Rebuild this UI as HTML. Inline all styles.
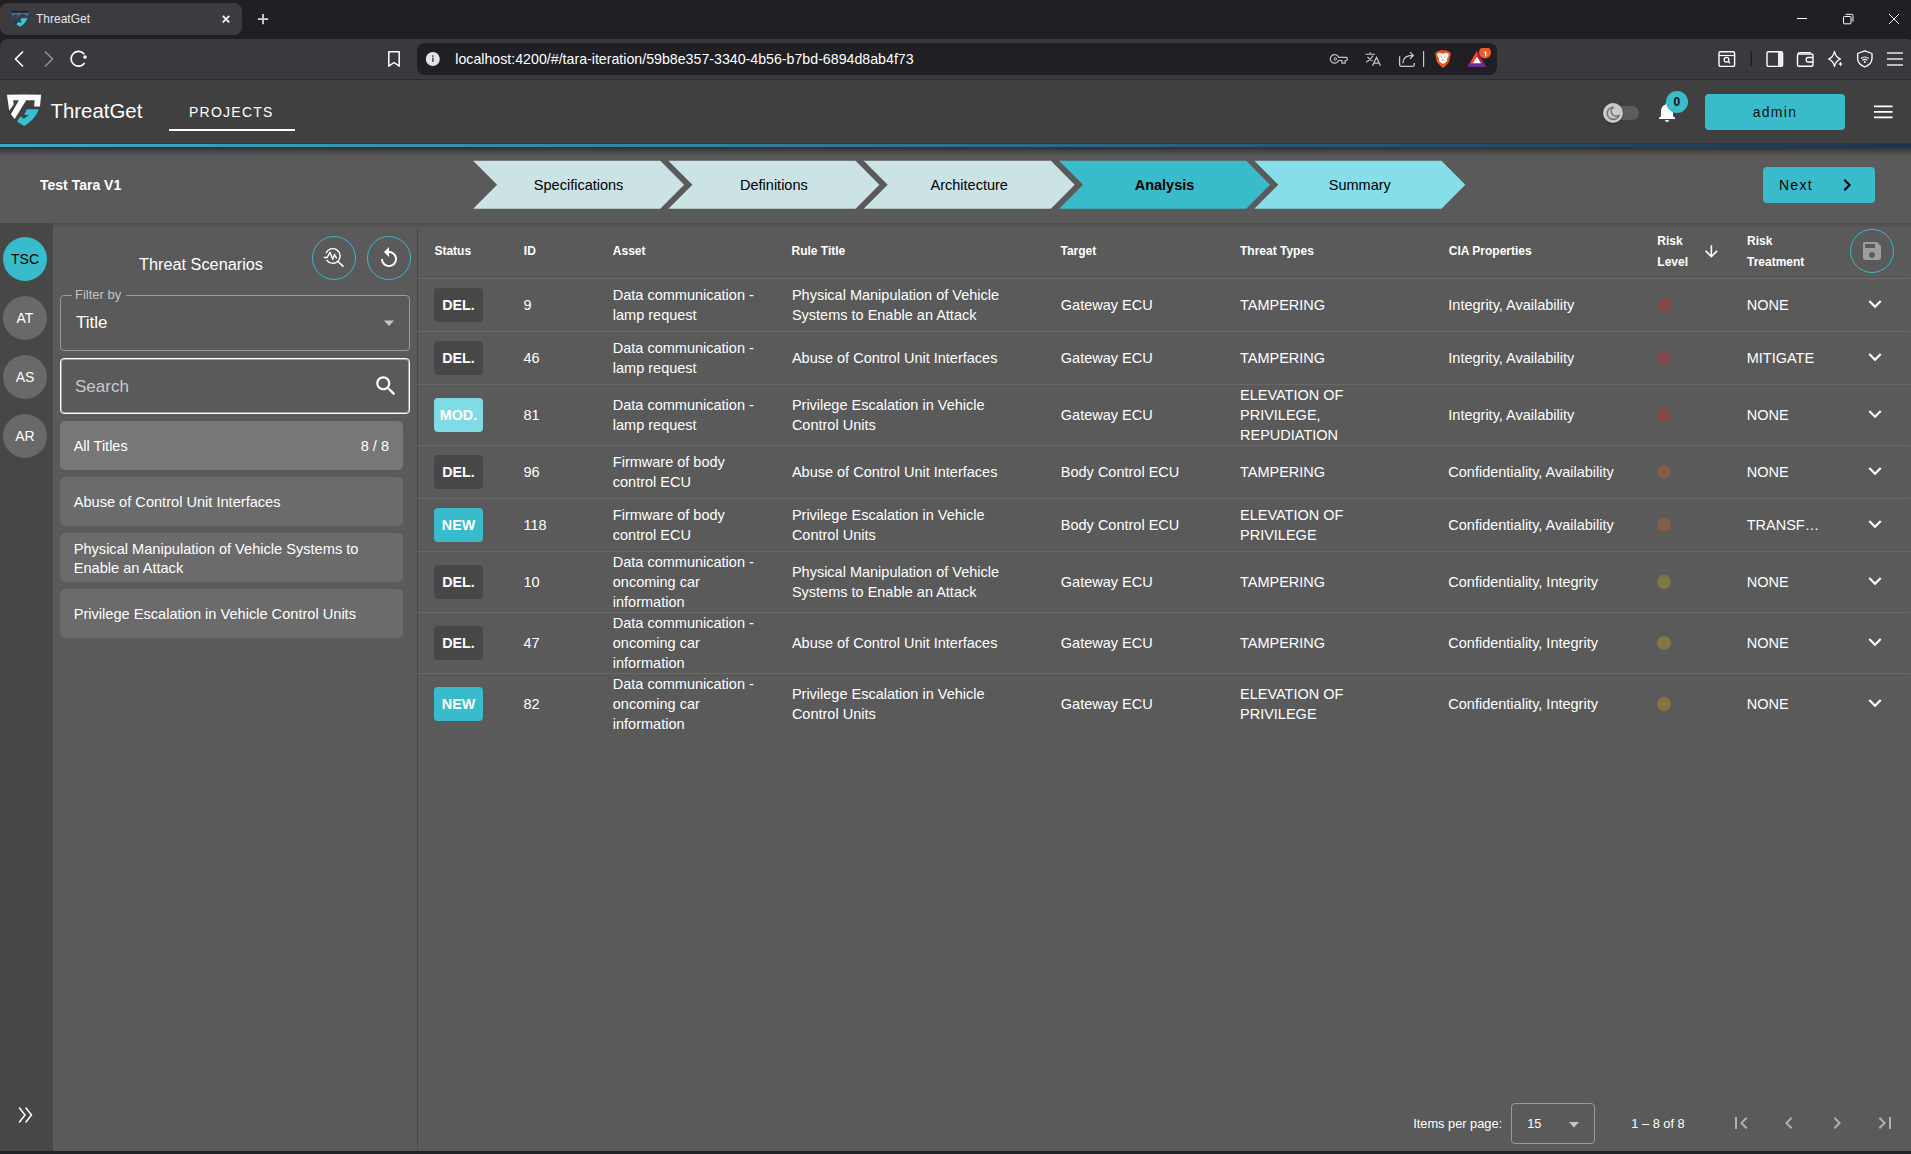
<!DOCTYPE html>
<html><head><meta charset="utf-8">
<style>
*{box-sizing:border-box;margin:0;padding:0}
html,body{width:1911px;height:1154px;overflow:hidden;background:#5a5a5a;font-family:"Liberation Sans",sans-serif;color:#fff}
.a{position:absolute}
.t{position:absolute;white-space:nowrap;line-height:1}
svg{display:block}
/* browser chrome */
#tabstrip{left:0;top:0;width:1911px;height:50px;background:#202024}
#tab{left:0;top:3px;width:242px;height:32px;background:#3c3b40;border-radius:8px}
#toolbar{left:0;top:39px;width:1911px;height:40px;background:#3a393e;border-radius:8px 3px 0 0}
#tbline{left:0;top:79px;width:1911px;height:1px;background:#2c2b30}
#urlbar{left:417px;top:43px;width:1080px;height:32px;background:#202024;border-radius:8px}
/* app header */
#apphdr{left:0;top:80px;width:1911px;height:63px;background:#404040}
#tealline{left:0;top:143px;width:1911px;height:5px;background:#353333;}
#teal{left:0;top:144px;width:1911px;height:3px;background:linear-gradient(to right,#3ca9c6 0%,#3383a2 34%,#2b6a89 55%,#22506e 76%,#193453 100%)}
#stepbar{left:0;top:148px;width:1911px;height:75px;background:#5a5a5a}
#stepshadow{left:0;top:148px;width:1911px;height:8px;background:linear-gradient(#333 0%,#4a4a4a 50%,#5a5a5a 100%)}
#nav{left:0;top:223px;width:53px;height:928px;background:#474747}
#panel{left:53px;top:223px;width:364px;height:928px;background:#5a5a5a}
#panelborder{left:417px;top:223px;width:1px;height:928px;background:#4a4a4a}
#mainshadow{left:53px;top:223px;width:1858px;height:5px;background:linear-gradient(#4d4d4d,#5a5a5a)}
#bottomstrip{left:0;top:1151px;width:1911px;height:3px;background:#202326}
.th{display:flex;align-items:center;font-size:12px;font-weight:700;line-height:21.6px;color:#fff;white-space:nowrap}
.td{display:flex;align-items:center;font-size:14.5px;line-height:20px;color:#fff;white-space:nowrap}
.bdg{width:49px;height:34px;border-radius:4px;font-size:14.3px;font-weight:700;color:#fff;line-height:34px;text-align:center}
.rl{left:418px;width:1492px;height:1px;background:#686868}
</style></head>
<body>
<div id="tabstrip" class="a"></div>
<div id="tab" class="a"></div>
<div id="toolbar" class="a"></div>
<div id="tbline" class="a"></div>
<div id="urlbar" class="a"></div>

<!-- tab -->
<svg class="a" style="left:11px;top:9.8px" width="18" height="18.3" viewBox="2 3 36 36" preserveAspectRatio="none">
<defs><linearGradient id="fg" x1="0" y1="0" x2="0" y2="1"><stop offset="0" stop-color="#0c2543"/><stop offset="0.12" stop-color="#0c2543"/><stop offset="0.25" stop-color="#6a86a3"/><stop offset="0.4" stop-color="#2b4d72"/><stop offset="1" stop-color="#143258"/></linearGradient></defs><path d="M2.95 4.85Q20 3.9 37.1 4.85L36 16.6L30.1 16.6L30.7 10.2L22.2 10.2L10.7 29.1L6.9 24.3L14.9 10.2L9.2 10.2L9.7 14.6L5.2 20.8Z" fill="url(#fg)"/>
<path d="M35 19.2L22.9 19.2L20.1 24.8L24.8 25.3L19.75 28.8L16.6 26.3L13 31.4L20.1 35.9Q31.2 29.5 35 19.2Z" fill="#3cc8d8"/>
</svg>
<div class="t" style="left:36px;top:13.2px;font-size:12px;color:#e6e6e8">ThreatGet</div>
<svg class="a" style="left:220px;top:12.8px" width="12" height="12" viewBox="0 0 12 12"><path d="M2.8 2.8L9.2 9.3M9.2 2.8L2.8 9.3" stroke="#f2f2f4" stroke-width="1.9"/></svg>
<svg class="a" style="left:256px;top:12px" width="14" height="14" viewBox="0 0 14 14"><path d="M7.05 1.9V12.2M1.9 7.05H12.2" stroke="#d6d6d8" stroke-width="1.8"/></svg>
<!-- window controls -->
<svg class="a" style="left:1795px;top:12px" width="14" height="14" viewBox="0 0 14 14"><path d="M2 6.5H12" stroke="#fff" stroke-width="1"/></svg>
<svg class="a" style="left:1841px;top:12px" width="14" height="14" viewBox="0 0 14 14"><rect x="2.5" y="4.5" width="7.5" height="7.3" rx="0.8" fill="none" stroke="#fff" stroke-width="1"/><path d="M4.6 2.3H10.8Q12 2.3 12 3.5V9.6" fill="none" stroke="#fff" stroke-width="1"/></svg>
<svg class="a" style="left:1887px;top:12px" width="14" height="14" viewBox="0 0 14 14"><path d="M2 2L12 12M12 2L2 12" stroke="#fff" stroke-width="1"/></svg>
<!-- toolbar -->
<svg class="a" style="left:10px;top:49px" width="80" height="20" viewBox="10 49 80 20">
<path d="M23 51.5L15.5 59L23 66.5" fill="none" stroke="#fff" stroke-width="1.6"/>
<path d="M45 51.5L52.5 59L45 66.5" fill="none" stroke="#8e8e92" stroke-width="1.6"/>
<path d="M84.6 63A7.4 7.4 0 1 1 84.3 54.2" fill="none" stroke="#fff" stroke-width="1.7"/>
<circle cx="85" cy="57.1" r="1.8" fill="#fff"/>
</svg>
<svg class="a" style="left:386px;top:50px" width="16" height="18" viewBox="386 50 16 18"><path d="M388.8 51.8H399.2V66.2L394 62.5L388.8 66.2Z" fill="none" stroke="#fff" stroke-width="1.5" stroke-linejoin="round"/></svg>
<svg class="a" style="left:425px;top:52px" width="16" height="14" viewBox="425 52 16 14"><circle cx="432.8" cy="59" r="7" fill="#e3e3e6"/><rect x="432" y="57.6" width="1.7" height="4.4" fill="#55555a"/><rect x="432" y="55.3" width="1.7" height="1.5" fill="#55555a"/></svg>
<div class="t" style="left:455.3px;top:51.7px;font-size:14.2px;color:#fff">localhost:4200/#/tara-iteration/59b8e357-3340-4b56-b7bd-6894d8ab4f73</div>
<!-- url right icons -->
<svg class="a" style="left:1328px;top:48px" width="170" height="22" viewBox="1328 48 170 22">
<path d="M1338.6 57.3A4.3 4.3 0 1 0 1338.6 60.5H1342V63.2H1345.2V60.5H1346.3Q1347.2 60.5 1347.2 59.6V58.2Q1347.2 57.3 1346.3 57.3Z" fill="none" stroke="#c8c8cc" stroke-width="1.2" stroke-linejoin="round"/>
<ellipse cx="1335.3" cy="59" rx="1.1" ry="1.4" fill="none" stroke="#c8c8cc" stroke-width="1"/>
<path d="M1365.5 54.2H1375M1370.2 52.2V54.2M1373.2 55.5Q1371 59.5 1366 62.2M1367.5 56.8Q1369.5 59.5 1372.8 60.8" fill="none" stroke="#c8c8cc" stroke-width="1.1"/>
<path d="M1372.5 65.8L1376.5 57.4L1380.5 65.8M1373.8 63.2H1379.2" fill="none" stroke="#c8c8cc" stroke-width="1.2"/>
<path d="M1399.6 56.3V64.6Q1399.6 66.3 1401.3 66.3H1412.6Q1414.3 66.3 1414.3 64.6V63.1" fill="none" stroke="#c8c8cc" stroke-width="1.3"/>
<path d="M1402.8 63.2Q1403 55.4 1413 55.4M1410 52.1L1413.3 55.4L1410 58.8" fill="none" stroke="#c8c8cc" stroke-width="1.3"/>
<rect x="1423" y="51" width="1.2" height="16" fill="#c8c8cc"/>
<path d="M1437 51.5L1440.5 50.3H1445.5L1449 51.5L1451 53.5L1450.3 56L1449 62L1446 65.5L1443 68L1440 65.5L1437 62L1435.7 56L1435 53.5Z" fill="#f1531f"/>
<path d="M1437.3 54.2L1439.5 52.8L1441.8 53.5H1444.2L1446.5 52.8L1448.7 54.2L1448.3 56.5L1446.8 59L1447.3 60.8L1445.3 62.5L1443 64L1440.7 62.5L1438.7 60.8L1439.2 59L1437.7 56.5Z" fill="#fff"/><path d="M1440.2 56.2L1442 57L1441.2 58ZM1445.8 56.2L1444 57L1444.8 58ZM1442 59.5H1444L1443 61.3Z" fill="#f1531f"/>
<path d="M1477 50.8L1486.4 66.9H1467.8Z" fill="#9e1f63"/>
<path d="M1477 50.8L1467.8 66.9L1472.5 66.9L1477 57Z" fill="#ff4724"/>
<path d="M1467.8 66.9L1470.3 63.4H1483.8L1486.4 66.9Z" fill="#662d91"/>
<path d="M1477 56.8L1481.2 63.2H1472.8Z" fill="#fff"/>
<circle cx="1485" cy="52.6" r="6" fill="#f25a2a"/>
</svg>
<svg class="a" style="left:1480px;top:47.5px" width="10" height="10" viewBox="0 0 10 10"><path d="M4.2 4.3L5.8 3.2H6.4V8.2H5.1V4.8L4.2 5.4Z" fill="#fff"/></svg>
<!-- right toolbar icons -->
<svg class="a" style="left:1714px;top:48px" width="197" height="22" viewBox="1714 48 197 22">
<rect x="1719" y="51.8" width="15.6" height="14.6" rx="1.5" fill="none" stroke="#fff" stroke-width="1.4"/>
<path d="M1719 55.5H1734.6" stroke="#fff" stroke-width="1.2"/>
<circle cx="1726.5" cy="59.8" r="2.4" fill="none" stroke="#fff" stroke-width="1.3"/>
<path d="M1728.3 61.6L1730 63.3" stroke="#fff" stroke-width="1.3"/>
<rect x="1750.5" y="51" width="1.5" height="15.5" fill="#1f1f23"/>
<rect x="1767" y="51.8" width="15.6" height="14.6" rx="1.5" fill="none" stroke="#fff" stroke-width="1.4"/>
<rect x="1778" y="52" width="4.5" height="14.2" fill="#eee"/>
<path d="M1798 54.3Q1798 52.5 1800 52.5H1810.8" fill="none" stroke="#fff" stroke-width="1.2"/>
<rect x="1797.5" y="54" width="15.5" height="12.2" rx="1.5" fill="none" stroke="#fff" stroke-width="1.4"/>
<path d="M1813 57.5H1808Q1806.2 57.5 1806.2 59.2V60.3Q1806.2 62 1808 62H1813" fill="none" stroke="#fff" stroke-width="1.3"/>
<path d="M1834.5 51.3Q1835.5 57 1840.5 59Q1835.5 61 1834.5 66.5Q1833.5 61 1828.5 59Q1833.5 57 1834.5 51.3Z" fill="none" stroke="#fff" stroke-width="1.3" stroke-linejoin="round"/>
<path d="M1840.5 61.5L1841.2 63.3L1843 64L1841.2 64.7L1840.5 66.5L1839.8 64.7L1838 64L1839.8 63.3Z" fill="#fff"/>
<path d="M1864.8 50.8L1872 53.5V58.5Q1872 64 1864.8 67Q1857.6 64 1857.6 58.5V53.5Z" fill="none" stroke="#fff" stroke-width="1.3" stroke-linejoin="round"/>
<path d="M1861 58.5Q1864.8 55.5 1868.6 58.5M1862.5 60.3Q1864.8 58.5 1867.1 60.3" fill="none" stroke="#fff" stroke-width="1.1"/>
<circle cx="1864.8" cy="62" r="0.9" fill="#fff"/>
<path d="M1887 53H1903M1887 59H1903M1887 65H1903" stroke="#e8e8ea" stroke-width="1.5"/>
</svg>
<div id="apphdr" class="a"></div>

<!-- app header content -->
<svg class="a" style="left:4px;top:90px" width="42" height="40" viewBox="0 0 42 40">
<path d="M2.95 4.85Q20 3.9 37.1 4.85L36 16.6L30.1 16.6L30.7 10.2L22.2 10.2L10.7 29.1L6.9 24.3L14.9 10.2L9.2 10.2L9.7 14.6L5.2 20.8Z" fill="#fff"/>
<path d="M35 19.2L22.9 19.2L20.1 24.8L24.8 25.3L19.75 28.8L16.6 26.3L13 31.4L20.1 35.9Q31.2 29.5 35 19.2Z" fill="#36bfcc"/>
</svg>
<div class="t" style="left:50.5px;top:101.2px;font-size:20.4px;color:#fff">ThreatGet</div>
<div class="t" style="left:189px;top:105.1px;font-size:14px;letter-spacing:1.25px;color:#fff">PROJECTS</div>
<div class="a" style="left:169px;top:129px;width:126px;height:1.6px;background:#fff"></div>
<!-- toggle -->
<div class="a" style="left:1604px;top:106px;width:35px;height:14px;border-radius:7px;background:#5c5c5c"></div>
<div class="a" style="left:1603px;top:103px;width:20px;height:20px;border-radius:10px;background:#c9c9c9;box-shadow:0 1px 2px rgba(0,0,0,.4)"></div>
<svg class="a" style="left:1605px;top:105px" width="16" height="16" viewBox="0 0 16 16"><path d="M8.3 2.3A6 6 0 1 0 14 10.3A4.8 4.8 0 0 1 8.3 2.3Z" fill="none" stroke="#717171" stroke-width="1.6" stroke-linejoin="round"/></svg>
<!-- bell -->
<svg class="a" style="left:1655px;top:100px" width="24" height="24" viewBox="0 0 24 24"><path d="M12 22c1.1 0 2-.9 2-2h-4c0 1.1.89 2 2 2zm6-6v-5c0-3.07-1.64-5.64-4.5-6.32V4c0-.83-.67-1.5-1.5-1.5s-1.5.67-1.5 1.5v.68C7.63 5.36 6 7.92 6 11v5l-2 2v1h16v-1l-2-2z" fill="#fff"/></svg>
<div class="a" style="left:1666px;top:91px;width:22px;height:22px;border-radius:11px;background:#38bccb"></div>
<div class="t" style="left:1673.5px;top:96px;font-size:12px;font-weight:700;color:#111">0</div>
<!-- admin -->
<div class="a" style="left:1705px;top:94px;width:140px;height:36px;border-radius:4px;background:#38bccb"></div>
<div class="t" style="left:1705px;top:105px;width:140px;text-align:center;font-size:14px;letter-spacing:1.25px;color:#111">admin</div>
<svg class="a" style="left:1872px;top:102px" width="22" height="20" viewBox="0 0 22 20"><path d="M2 4.3H20.5M2 9.8H20.5M2 15.3H20.5" stroke="#fff" stroke-width="1.8"/></svg>
<div id="tealline" class="a"></div>
<div id="teal" class="a"></div>
<div id="stepbar" class="a"></div>

<div id="stepshadow" class="a"></div>

<!-- stepper -->
<div class="t" style="left:40px;top:178.4px;font-size:14px;font-weight:700;color:#fff">Test Tara V1</div>
<svg class="a" style="left:0;top:0" width="1911" height="230" viewBox="0 0 1911 230"><polygon points="473.1,160.8 660.3,160.8 684.1,184.8 660.3,208.8 473.1,208.8 497.1,184.8" fill="#cbe3e5"/><polygon points="668.4,160.8 855.6,160.8 879.4,184.8 855.6,208.8 668.4,208.8 692.4,184.8" fill="#cbe3e5"/><polygon points="863.7,160.8 1050.9,160.8 1074.7,184.8 1050.9,208.8 863.7,208.8 887.7,184.8" fill="#cbe3e5"/><polygon points="1059.0,160.8 1246.2,160.8 1270.0,184.8 1246.2,208.8 1059.0,208.8 1083.0,184.8" fill="#38bccb"/><polygon points="1254.3,160.8 1441.5,160.8 1465.3,184.8 1441.5,208.8 1254.3,208.8 1278.3,184.8" fill="#85dee8"/></svg>
<div class="t" style="left:478.6px;top:177.9px;width:200px;text-align:center;font-size:14.5px;font-weight:400;color:#000">Specifications</div>
<div class="t" style="left:673.9px;top:177.9px;width:200px;text-align:center;font-size:14.5px;font-weight:400;color:#000">Definitions</div>
<div class="t" style="left:869.2px;top:177.9px;width:200px;text-align:center;font-size:14.5px;font-weight:400;color:#000">Architecture</div>
<div class="t" style="left:1064.5px;top:177.9px;width:200px;text-align:center;font-size:14.5px;font-weight:700;color:#000">Analysis</div>
<div class="t" style="left:1259.8px;top:177.9px;width:200px;text-align:center;font-size:14.5px;font-weight:400;color:#000">Summary</div>

<div class="a" style="left:1763px;top:167px;width:112px;height:36px;border-radius:4px;background:#38bccb"></div>
<div class="t" style="left:1779px;top:178px;font-size:14px;letter-spacing:1.25px;color:#000">Next</div>
<svg class="a" style="left:1835px;top:173px" width="24" height="24" viewBox="0 0 24 24"><path d="M10 6L8.59 7.41 13.17 12l-4.58 4.59L10 18l6-6z" fill="#000"/></svg>
<div id="nav" class="a"></div>
<div id="panel" class="a"></div>
<div id="panelborder" class="a"></div>
<div id="mainshadow" class="a"></div>

<!-- left nav -->
<div class="a" style="left:3px;top:237px;width:44px;height:44px;border-radius:22px;background:#38bccb"></div>
<div class="t" style="left:3px;top:252px;width:44px;text-align:center;font-size:14px;color:#000">TSC</div>
<div class="a" style="left:3px;top:296px;width:44px;height:44px;border-radius:22px;background:#696969"></div>
<div class="t" style="left:3px;top:311.3px;width:44px;text-align:center;font-size:14px;color:#fff">AT</div>
<div class="a" style="left:3px;top:355px;width:44px;height:44px;border-radius:22px;background:#696969"></div>
<div class="t" style="left:3px;top:370.3px;width:44px;text-align:center;font-size:14px;color:#fff">AS</div>
<div class="a" style="left:3px;top:414px;width:44px;height:44px;border-radius:22px;background:#696969"></div>
<div class="t" style="left:3px;top:429.3px;width:44px;text-align:center;font-size:14px;color:#fff">AR</div>
<svg class="a" style="left:13px;top:1103px" width="24" height="24" viewBox="0 0 24 24"><path d="M6.5 5L12 12L6.5 19M13 5L18.5 12L13 19" fill="none" stroke="#fff" stroke-width="1.5" stroke-linecap="round"/></svg>
<!-- side panel -->
<div class="t" style="left:139px;top:256.3px;font-size:16.3px;color:#fff">Threat Scenarios</div>
<div class="a" style="left:312px;top:236px;width:44px;height:44px;border-radius:22px;border:1px solid #36bac9"></div>
<svg class="a" style="left:322px;top:246px" width="24" height="24" viewBox="0 0 24 24"><path d="M4 7.2A7.3 7.3 0 1 1 4.6 13.8" fill="none" stroke="#fff" stroke-width="1.4"/><path d="M15.6 15.1L21.4 20.6" stroke="#fff" stroke-width="1.5"/><path d="M1.8 11.5H5.2L8 6.3L10.7 13.3L12.5 8.5L14.3 11.8H15" fill="none" stroke="#fff" stroke-width="1.4" stroke-linejoin="round"/></svg>
<div class="a" style="left:367px;top:236px;width:44px;height:44px;border-radius:22px;border:1px solid #36bac9"></div>
<svg class="a" style="left:377px;top:246px" width="24" height="24" viewBox="0 0 24 24"><path d="M12 5V1L7 6l5 5V7c3.31 0 6 2.69 6 6s-2.69 6-6 6-6-2.69-6-6H4c0 4.42 3.58 8 8 8s8-3.58 8-8-3.58-8-8-8z" fill="#fff"/></svg>
<!-- filter select -->
<div class="a" style="left:60px;top:295px;width:350px;height:56px;border:1px solid #9a9a9a;border-radius:4px"></div>
<div class="a" style="left:72px;top:293px;width:54px;height:4px;background:#5a5a5a"></div>
<div class="t" style="left:75px;top:288.3px;font-size:13px;color:#c4c4c4">Filter by</div>
<div class="t" style="left:76px;top:313.6px;font-size:17px;color:#fff">Title</div>
<svg class="a" style="left:379px;top:311px" width="20" height="20" viewBox="0 0 20 20"><path d="M5 9.6L10 14.9L15 9.6Z" fill="#c4c4c4"/></svg>
<!-- search -->
<div class="a" style="left:60px;top:358px;width:350px;height:56px;border:1px solid #fff;box-shadow:inset 0 0 0 1px rgba(255,255,255,0.4);border-radius:4px"></div>
<div class="t" style="left:75px;top:377.9px;font-size:17px;color:#c8c8c8">Search</div>
<svg class="a" style="left:373px;top:373px" width="26" height="26" viewBox="0 0 24 24"><path d="M15.5 14h-.79l-.28-.27C15.41 12.59 16 11.11 16 9.5 16 5.91 13.09 3 9.5 3S3 5.91 3 9.5 5.91 16 9.5 16c1.61 0 3.09-.59 4.23-1.57l.27.28v.79l5 4.99L20.49 19l-4.99-5zm-6 0C7.01 14 5 11.99 5 9.5S7.01 5 9.5 5 14 7.01 14 9.5 11.99 14 9.5 14z" fill="#fff"/></svg>
<!-- list -->
<div class="a" style="left:60px;top:421px;width:343px;height:49px;border-radius:5px;background:#777"></div>
<div class="t" style="left:73.7px;top:438.9px;font-size:14.5px;color:#fff">All Titles</div>
<div class="t" style="left:303px;top:438.9px;width:86px;text-align:right;font-size:14.5px;color:#fff">8 / 8</div>
<div class="a" style="left:60px;top:477px;width:343px;height:49px;border-radius:5px;background:#6b6b6b"></div>
<div class="t" style="left:73.7px;top:495.1px;font-size:14.6px;color:#fff">Abuse of Control Unit Interfaces</div>
<div class="a" style="left:60px;top:533px;width:343px;height:49px;border-radius:5px;background:#6b6b6b"></div>
<div class="t" style="left:73.7px;top:539.6px;font-size:14.6px;line-height:19.5px;white-space:normal;width:320px;color:#fff">Physical Manipulation of Vehicle Systems to Enable an Attack</div>
<div class="a" style="left:60px;top:589px;width:343px;height:49px;border-radius:5px;background:#6b6b6b"></div>
<div class="t" style="left:73.7px;top:607.4px;font-size:14.6px;color:#fff">Privilege Escalation in Vehicle Control Units</div>
<!-- table -->
<div class="a th" style="left:434.4px;top:224px;height:55px">Status</div>
<div class="a th" style="left:523.8px;top:224.2px;height:55px">ID</div>
<div class="a th" style="left:612.8px;top:224.2px;height:55px">Asset</div>
<div class="a th" style="left:791.5px;top:224.2px;height:55px">Rule Title</div>
<div class="a th" style="left:1060.5px;top:224.2px;height:55px">Target</div>
<div class="a th" style="left:1240px;top:224.2px;height:55px">Threat Types</div>
<div class="a th" style="left:1448.8px;top:224.2px;height:55px">CIA Properties</div>
<div class="a th" style="left:1657.3px;top:224.6px;height:55px;line-height:21.2px">Risk<br>Level</div>
<div class="a th" style="left:1747px;top:224.6px;height:55px;line-height:21.2px">Risk<br>Treatment</div>
<svg class="a" style="left:1701.6px;top:241.8px" width="18.75" height="18.75" viewBox="0 0 24 24"><path d="M20 12l-1.41-1.41L13 16.17V4h-2v12.17l-5.58-5.59L4 12l8 8 8-8z" fill="#fff"/></svg>
<div class="a" style="left:1850px;top:228.5px;width:44px;height:44px;border-radius:22px;border:1px solid #36bac9"></div>
<svg class="a" style="left:1860px;top:238.5px" width="24" height="24" viewBox="0 0 24 24"><path d="M17 3H5c-1.11 0-2 .9-2 2v14c0 1.1.89 2 2 2h14c1.1 0 2-.9 2-2V7l-4-4zm-5 16c-1.66 0-3-1.34-3-3s1.34-3 3-3 3 1.34 3 3-1.34 3-3 3zm3-10H5V5h10v4z" fill="#9e9e9e"/></svg>
<div class="a rl" style="top:278px"></div>
<div class="a bdg" style="left:434px;top:288.0px;background:#474747">DEL.</div>
<div class="a td" style="left:523.5px;top:279px;height:52px">9</div>
<div class="a td" style="left:612.8px;top:279px;height:52px">Data communication -<br>lamp request</div>
<div class="a td" style="left:791.9px;top:279px;height:52px">Physical Manipulation of Vehicle<br>Systems to Enable an Attack</div>
<div class="a td" style="left:1060.8px;top:279px;height:52px">Gateway ECU</div>
<div class="a td" style="left:1240px;top:279px;height:52px">TAMPERING</div>
<div class="a td" style="left:1448.3px;top:279px;height:52px">Integrity, Availability</div>
<div class="a" style="left:1657px;top:298.0px;width:14px;height:14px;border-radius:7px;background:#824848"></div>
<div class="a td" style="left:1746.7px;top:279px;height:52px">NONE</div>
<svg class="a" style="left:1862px;top:291.3px" width="26" height="26" viewBox="0 0 24 24"><path d="M16.59 8.59L12 13.17 7.41 8.59 6 10l6 6 6-6z" fill="#fff"/></svg>
<div class="a rl" style="top:331px"></div>
<div class="a bdg" style="left:434px;top:341.0px;background:#474747">DEL.</div>
<div class="a td" style="left:523.5px;top:332px;height:52px">46</div>
<div class="a td" style="left:612.8px;top:332px;height:52px">Data communication -<br>lamp request</div>
<div class="a td" style="left:791.9px;top:332px;height:52px">Abuse of Control Unit Interfaces</div>
<div class="a td" style="left:1060.8px;top:332px;height:52px">Gateway ECU</div>
<div class="a td" style="left:1240px;top:332px;height:52px">TAMPERING</div>
<div class="a td" style="left:1448.3px;top:332px;height:52px">Integrity, Availability</div>
<div class="a" style="left:1657px;top:351.0px;width:14px;height:14px;border-radius:7px;background:#824848"></div>
<div class="a td" style="left:1746.7px;top:332px;height:52px">MITIGATE</div>
<svg class="a" style="left:1862px;top:344.3px" width="26" height="26" viewBox="0 0 24 24"><path d="M16.59 8.59L12 13.17 7.41 8.59 6 10l6 6 6-6z" fill="#fff"/></svg>
<div class="a rl" style="top:384px"></div>
<div class="a bdg" style="left:434px;top:398.0px;background:#7fdbe5">MOD.</div>
<div class="a td" style="left:523.5px;top:385px;height:60px">81</div>
<div class="a td" style="left:612.8px;top:385px;height:60px">Data communication -<br>lamp request</div>
<div class="a td" style="left:791.9px;top:385px;height:60px">Privilege Escalation in Vehicle<br>Control Units</div>
<div class="a td" style="left:1060.8px;top:385px;height:60px">Gateway ECU</div>
<div class="a td" style="left:1240px;top:385px;height:60px">ELEVATION OF<br>PRIVILEGE,<br>REPUDIATION</div>
<div class="a td" style="left:1448.3px;top:385px;height:60px">Integrity, Availability</div>
<div class="a" style="left:1657px;top:408.0px;width:14px;height:14px;border-radius:7px;background:#824848"></div>
<div class="a td" style="left:1746.7px;top:385px;height:60px">NONE</div>
<svg class="a" style="left:1862px;top:401.3px" width="26" height="26" viewBox="0 0 24 24"><path d="M16.59 8.59L12 13.17 7.41 8.59 6 10l6 6 6-6z" fill="#fff"/></svg>
<div class="a rl" style="top:445px"></div>
<div class="a bdg" style="left:434px;top:455.0px;background:#474747">DEL.</div>
<div class="a td" style="left:523.5px;top:446px;height:52px">96</div>
<div class="a td" style="left:612.8px;top:446px;height:52px">Firmware of body<br>control ECU</div>
<div class="a td" style="left:791.9px;top:446px;height:52px">Abuse of Control Unit Interfaces</div>
<div class="a td" style="left:1060.8px;top:446px;height:52px">Body Control ECU</div>
<div class="a td" style="left:1240px;top:446px;height:52px">TAMPERING</div>
<div class="a td" style="left:1448.3px;top:446px;height:52px">Confidentiality, Availability</div>
<div class="a" style="left:1657px;top:465.0px;width:14px;height:14px;border-radius:7px;background:#825e48"></div>
<div class="a td" style="left:1746.7px;top:446px;height:52px">NONE</div>
<svg class="a" style="left:1862px;top:458.3px" width="26" height="26" viewBox="0 0 24 24"><path d="M16.59 8.59L12 13.17 7.41 8.59 6 10l6 6 6-6z" fill="#fff"/></svg>
<div class="a rl" style="top:498px"></div>
<div class="a bdg" style="left:434px;top:508.0px;background:#38bccb">NEW</div>
<div class="a td" style="left:523.5px;top:499px;height:52px">118</div>
<div class="a td" style="left:612.8px;top:499px;height:52px">Firmware of body<br>control ECU</div>
<div class="a td" style="left:791.9px;top:499px;height:52px">Privilege Escalation in Vehicle<br>Control Units</div>
<div class="a td" style="left:1060.8px;top:499px;height:52px">Body Control ECU</div>
<div class="a td" style="left:1240px;top:499px;height:52px">ELEVATION OF<br>PRIVILEGE</div>
<div class="a td" style="left:1448.3px;top:499px;height:52px">Confidentiality, Availability</div>
<div class="a" style="left:1657px;top:518.0px;width:14px;height:14px;border-radius:7px;background:#825e48"></div>
<div class="a td" style="left:1746.7px;top:499px;height:52px">TRANSF…</div>
<svg class="a" style="left:1862px;top:511.3px" width="26" height="26" viewBox="0 0 24 24"><path d="M16.59 8.59L12 13.17 7.41 8.59 6 10l6 6 6-6z" fill="#fff"/></svg>
<div class="a rl" style="top:551px"></div>
<div class="a bdg" style="left:434px;top:565.0px;background:#474747">DEL.</div>
<div class="a td" style="left:523.5px;top:552px;height:60px">10</div>
<div class="a td" style="left:612.8px;top:552px;height:60px">Data communication -<br>oncoming car<br>information</div>
<div class="a td" style="left:791.9px;top:552px;height:60px">Physical Manipulation of Vehicle<br>Systems to Enable an Attack</div>
<div class="a td" style="left:1060.8px;top:552px;height:60px">Gateway ECU</div>
<div class="a td" style="left:1240px;top:552px;height:60px">TAMPERING</div>
<div class="a td" style="left:1448.3px;top:552px;height:60px">Confidentiality, Integrity</div>
<div class="a" style="left:1657px;top:575.0px;width:14px;height:14px;border-radius:7px;background:#827648"></div>
<div class="a td" style="left:1746.7px;top:552px;height:60px">NONE</div>
<svg class="a" style="left:1862px;top:568.3px" width="26" height="26" viewBox="0 0 24 24"><path d="M16.59 8.59L12 13.17 7.41 8.59 6 10l6 6 6-6z" fill="#fff"/></svg>
<div class="a rl" style="top:612px"></div>
<div class="a bdg" style="left:434px;top:626.0px;background:#474747">DEL.</div>
<div class="a td" style="left:523.5px;top:613px;height:60px">47</div>
<div class="a td" style="left:612.8px;top:613px;height:60px">Data communication -<br>oncoming car<br>information</div>
<div class="a td" style="left:791.9px;top:613px;height:60px">Abuse of Control Unit Interfaces</div>
<div class="a td" style="left:1060.8px;top:613px;height:60px">Gateway ECU</div>
<div class="a td" style="left:1240px;top:613px;height:60px">TAMPERING</div>
<div class="a td" style="left:1448.3px;top:613px;height:60px">Confidentiality, Integrity</div>
<div class="a" style="left:1657px;top:636.0px;width:14px;height:14px;border-radius:7px;background:#827648"></div>
<div class="a td" style="left:1746.7px;top:613px;height:60px">NONE</div>
<svg class="a" style="left:1862px;top:629.3px" width="26" height="26" viewBox="0 0 24 24"><path d="M16.59 8.59L12 13.17 7.41 8.59 6 10l6 6 6-6z" fill="#fff"/></svg>
<div class="a rl" style="top:673px"></div>
<div class="a bdg" style="left:434px;top:687.0px;background:#38bccb">NEW</div>
<div class="a td" style="left:523.5px;top:674px;height:60px">82</div>
<div class="a td" style="left:612.8px;top:674px;height:60px">Data communication -<br>oncoming car<br>information</div>
<div class="a td" style="left:791.9px;top:674px;height:60px">Privilege Escalation in Vehicle<br>Control Units</div>
<div class="a td" style="left:1060.8px;top:674px;height:60px">Gateway ECU</div>
<div class="a td" style="left:1240px;top:674px;height:60px">ELEVATION OF<br>PRIVILEGE</div>
<div class="a td" style="left:1448.3px;top:674px;height:60px">Confidentiality, Integrity</div>
<div class="a" style="left:1657px;top:697.0px;width:14px;height:14px;border-radius:7px;background:#827648"></div>
<div class="a td" style="left:1746.7px;top:674px;height:60px">NONE</div>
<svg class="a" style="left:1862px;top:690.3px" width="26" height="26" viewBox="0 0 24 24"><path d="M16.59 8.59L12 13.17 7.41 8.59 6 10l6 6 6-6z" fill="#fff"/></svg>


<!-- paginator -->
<div class="t" style="left:1413.2px;top:1118.2px;font-size:12.8px;color:#fff">Items per page:</div>
<div class="a" style="left:1511px;top:1103px;width:84px;height:41px;border:1px solid #9a9a9a;border-radius:4px"></div>
<div class="t" style="left:1527.2px;top:1118.2px;font-size:12.8px;color:#fff">15</div>
<svg class="a" style="left:1564px;top:1115px" width="20" height="20" viewBox="0 0 20 20"><path d="M5 7L10 12.4L15 7Z" fill="#c4c4c4"/></svg>
<div class="t" style="left:1631.3px;top:1118.2px;font-size:12.8px;color:#fff">1 – 8 of 8</div>
<svg class="a" style="left:1728.7px;top:1111px" width="24" height="24" viewBox="0 0 24 24"><path d="M18.41 16.59L13.82 12l4.59-4.59L17 6l-6 6 6 6zM6 6h2v12H6z" fill="#b0b0b0"/></svg>
<svg class="a" style="left:1777px;top:1111px" width="24" height="24" viewBox="0 0 24 24"><path d="M15.41 7.41L14 6l-6 6 6 6 1.41-1.41L10.83 12z" fill="#b0b0b0"/></svg>
<svg class="a" style="left:1825px;top:1111px" width="24" height="24" viewBox="0 0 24 24"><path d="M10 6L8.59 7.41 13.17 12l-4.58 4.59L10 18l6-6z" fill="#b0b0b0"/></svg>
<svg class="a" style="left:1873px;top:1111px" width="24" height="24" viewBox="0 0 24 24"><path d="M5.59 7.41L10.18 12l-4.59 4.59L7 18l6-6-6-6zM16 6h2v12h-2z" fill="#b0b0b0"/></svg>
<div id="bottomstrip" class="a"></div>
</body></html>
